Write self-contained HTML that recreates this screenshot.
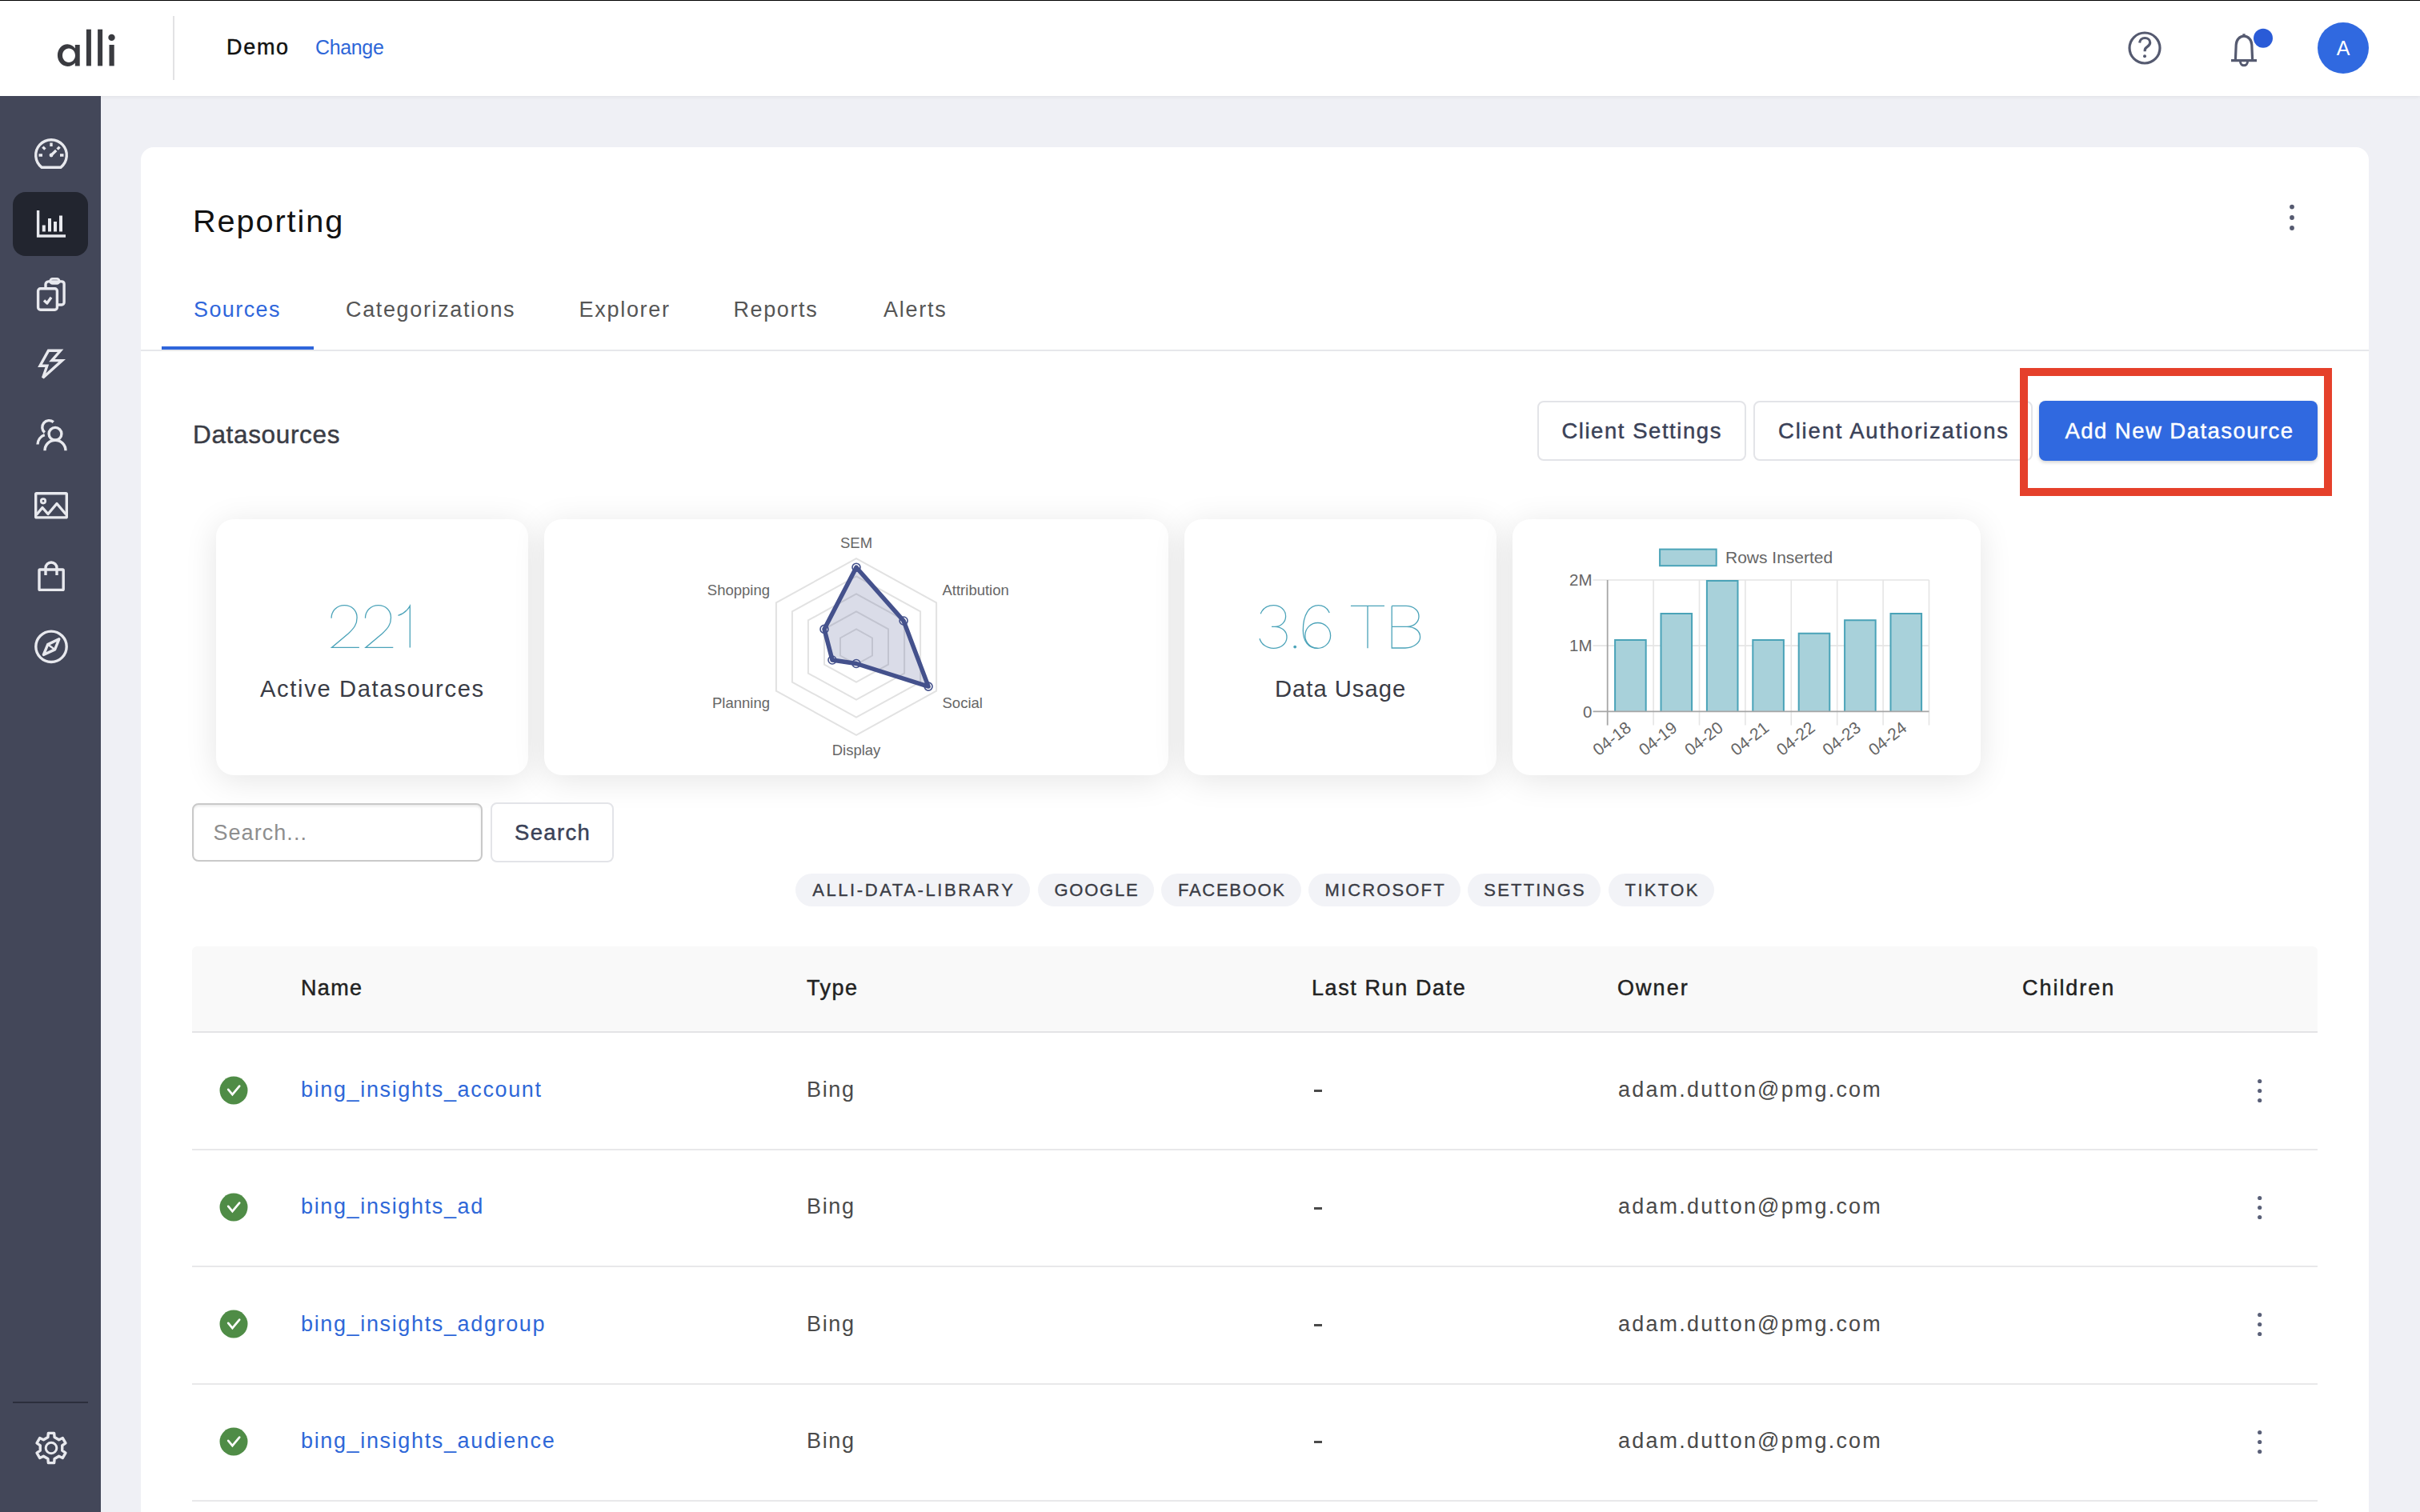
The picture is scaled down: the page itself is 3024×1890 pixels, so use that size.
<!DOCTYPE html>
<html><head><meta charset="utf-8">
<style>
*{box-sizing:border-box;margin:0;padding:0}
@media (max-width:2000px){html{zoom:0.5}}
html,body{width:3024px;height:1890px;overflow:hidden;background:#eff0f5;font-family:"Liberation Sans",sans-serif}
.a{position:absolute;white-space:nowrap;line-height:1}
svg{position:absolute;overflow:visible}
#hdr{position:absolute;left:0;top:0;width:3024px;height:120px;background:#fff;box-shadow:0 1px 5px rgba(0,0,0,0.07)}
#topline{position:absolute;left:0;top:0;width:3024px;height:1px;background:#000;z-index:5}
#side{position:absolute;left:0;top:120px;width:126px;height:1770px;background:#434759}
#card{position:absolute;left:176px;top:184px;width:2784px;height:1800px;background:#fff;border-radius:16px}
.med{-webkit-text-stroke:0.45px currentColor}
.btn{position:absolute;border:2px solid #e3e4e8;border-radius:8px;background:#fff}
.bt{font-size:27.5px;color:#3a4157;top:524.7px}
.sc{position:absolute;top:649px;height:320px;background:#fff;border-radius:22px;box-shadow:0 6px 40px rgba(0,0,0,0.105)}
.tag{position:absolute;top:1092px;height:41px;border-radius:21px;background:#f2f3f7;text-align:center;font-size:22px;line-height:41px;color:#3a3c45;letter-spacing:2.9px;-webkit-text-stroke:0.35px currentColor;text-indent:2.9px}
.th{top:1222.1px;font-size:27px;color:#222}
.td{font-size:27px;color:#4a4a4a;letter-spacing:1.64px}
</style></head><body>
<div id="hdr">
  <svg style="left:0;top:0" width="300" height="120" viewBox="0 0 300 120">
    <g fill="#3a3b40">
      <path fill-rule="evenodd" d="M84.3 55.2c-6.9 0-12.4 6.2-12.4 13.9s5.5 13.9 12.4 13.9c4 0 7.1-1.8 9.5-4.6v4.0h5.9V56h-5.9v4.4c-2.4-3-5.5-5.2-9.5-5.2zM86 60.6c4.4 0 8 3.9 8 8.7s-3.6 8.7-8 8.7-8-3.9-8-8.7 3.6-8.7 8-8.7z"/>
      <rect x="107.9" y="36.7" width="6" height="45.7"/>
      <rect x="122.1" y="36.7" width="6" height="45.7"/>
      <rect x="136.5" y="56" width="6.2" height="26.4"/>
      <circle cx="139.5" cy="46.9" r="4.2"/>
    </g>
    <rect x="216" y="20" width="2" height="80" fill="#e2e2e4"/>
  </svg>
  <div class="a med" id="demo" style="left:283px;top:45.6px;font-size:27px;color:#111;letter-spacing:1.7px">Demo</div>
  <div class="a" id="change" style="left:394px;top:46.8px;font-size:25px;color:#2e67d8;letter-spacing:-0.35px">Change</div>
  <!-- help -->
  <svg style="left:2650px;top:30px" width="60" height="60" viewBox="0 0 60 60">
    <circle cx="30" cy="30" r="19" fill="none" stroke="#555a70" stroke-width="3.2"/>
    <path d="M23.6 23.5c0.3-3.6 3-6 6.6-6 3.7 0 6.5 2.5 6.5 5.8 0 2.8-1.8 4.1-3.7 5.3-1.7 1.1-2.8 2-2.8 4.4v1.3" fill="none" stroke="#555a70" stroke-width="3.2"/>
    <circle cx="30" cy="40.3" r="2" fill="#555a70"/>
  </svg>
  <!-- bell -->
  <svg style="left:2770px;top:30px" width="80" height="60" viewBox="0 0 80 60">
    <path d="M18 45.6h32M23.4 44.6L24.2 26c0.2-6 4.3-10.8 9.8-10.8s9.6 4.8 9.8 10.8L44.6 44.6M34 15.2v-3" fill="none" stroke="#555a70" stroke-width="3.2"/>
    <path d="M29.5 47c0 2.7 2 4.8 4.5 4.8s4.5-2.1 4.5-4.8" fill="none" stroke="#555a70" stroke-width="3"/>
    <circle cx="58" cy="17.8" r="12.5" fill="#fff"/>
    <circle cx="58" cy="17.8" r="12" fill="#2a5bd7"/>
  </svg>
  <!-- avatar -->
  <div style="position:absolute;left:2896px;top:28px;width:64px;height:64px;border-radius:50%;background:#3069e0"></div>
  <div class="a" style="left:2896px;top:48px;width:64px;text-align:center;font-size:25px;color:#fff">A</div>
</div>
<div id="topline"></div>
<div id="side"></div>
<div style="position:absolute;left:16px;top:240px;width:94px;height:80px;border-radius:16px;background:#22252f"></div>
<svg style="left:0;top:0" width="126" height="1890" viewBox="0 0 126 1890">
 <g fill="none" stroke="#e8e9ee" stroke-width="3.4" stroke-linejoin="round">
  <!-- speedometer -->
  <path d="M52.2 209.3A19.3 19.3 0 1 1 75.8 209.3Z"/>
  <path d="M64 178.5v4.5M48.5 194h4.5M75 194h4.5M53.4 183.6l3 3M74.6 183.6l-3 3M64 194l6.2-6"/>
  <circle cx="64" cy="194" r="2.4" fill="#e8e9ee" stroke="none"/>
  <!-- bar chart -->
  <path d="M47.6 263V295H82" stroke-linejoin="miter"/>
  <path d="M54.8 281.5V289.4M62 273V289.4M69 277V289.4M76 269.6V289.4" stroke-width="4"/>
  <!-- clipboard -->
  <rect x="47.6" y="360.7" width="23.8" height="26.6" rx="3"/>
  <path d="M57 359.5V355.5a3.6 3.6 0 0 1 3.6-3.6H77.4a3 3 0 0 1 2.7 3V378a3 3 0 0 1-3 3H73"/>
  <rect x="62.7" y="348.4" width="11.4" height="5.9" rx="2.9" stroke-width="2.8"/>
  <path d="M55 375.6l3.8 3.4 5.2-7.2"/>
  <!-- lightning -->
  <path d="M60.5 438.3H75.6L64.8 450.6H77.6L53.6 472.2L58.8 457.2H50Z" stroke-linejoin="miter" stroke-miterlimit="3"/>
  <!-- people -->
  <path d="M66.8 527.6A8 8 0 1 0 55.8 540.6"/>
  <path d="M47 555.5A13 13 0 0 1 55.8 543.6"/>
  <circle cx="69" cy="542.3" r="7.9"/>
  <path d="M56 563.2A13 13 0 0 1 82 563.2"/>
  <!-- image -->
  <rect x="44.7" y="616.7" width="38.6" height="30.2" rx="1"/>
  <circle cx="54" cy="626.3" r="2.7" stroke-width="2.8"/>
  <path d="M45.5 643.5L53 634.5L60 642.5L71 629.5L82.5 643"/>
  <!-- bag -->
  <rect x="49" y="712" width="30.2" height="25.4" rx="1"/>
  <path d="M57 719V710A7 7 0 0 1 71 710V719"/>
  <!-- compass -->
  <circle cx="64" cy="808.3" r="19.2"/>
  <path d="M73.8 798.8L59.7 805.6L54.4 818.5L68.6 811.9Z"/>
  <path d="M59.7 805.6L68.6 811.9" stroke-width="2.4"/>
  <!-- gear -->
  <path d="M59.88 1796.52 L60.37 1791.35 L67.63 1791.35 L68.12 1796.52 L73.62 1799.69 L78.34 1797.53 L81.96 1803.81 L77.74 1806.83 L77.74 1813.17 L81.96 1816.19 L78.34 1822.47 L73.62 1820.31 L68.12 1823.48 L67.63 1828.65 L60.37 1828.65 L59.88 1823.48 L54.38 1820.31 L49.66 1822.47 L46.04 1816.19 L50.26 1813.17 L50.26 1806.83 L46.04 1803.81 L49.66 1797.53 L54.38 1799.69Z"/>
  <circle cx="64" cy="1810" r="6.8" stroke-width="3"/>
 </g>
 <rect x="16" y="1752" width="94" height="2" fill="#2b2e3c"/>
</svg>
<div id="card"></div>
<div class="a" id="rep" style="left:241px;top:256.5px;font-size:39.7px;color:#111;letter-spacing:1.9px">Reporting</div>
<svg style="left:2850px;top:250px" width="30" height="44" viewBox="0 0 30 44"><g fill="#555a70"><circle cx="14" cy="8.6" r="2.9"/><circle cx="14" cy="22" r="2.9"/><circle cx="14" cy="35" r="2.9"/></g></svg>
<div class="a" style="left:242px;top:374px;font-size:27px;color:#2f66db;letter-spacing:1.4px">Sources</div>
<div class="a" style="left:432px;top:374px;font-size:27px;color:#555;letter-spacing:1.64px">Categorizations</div>
<div class="a" style="left:723.6px;top:374px;font-size:27px;color:#555;letter-spacing:1.69px">Explorer</div>
<div class="a" style="left:916.5px;top:374px;font-size:27px;color:#555;letter-spacing:1.6px">Reports</div>
<div class="a" style="left:1104px;top:374px;font-size:27px;color:#555;letter-spacing:1.76px">Alerts</div>
<div style="position:absolute;left:176px;top:437px;width:2784px;height:2px;background:#e6e7eb"></div>
<div style="position:absolute;left:202px;top:433px;width:190px;height:4px;background:#2f66db"></div>
<div class="a med" style="left:241px;top:527.5px;font-size:31.5px;color:#3a3c45;letter-spacing:0.66px">Datasources</div>
<div class="btn" style="left:1921px;top:501px;width:261px;height:75px"></div>
<div class="btn" style="left:2191px;top:501px;width:349px;height:75px"></div>
<div style="position:absolute;left:2548px;top:501px;width:348px;height:75px;border-radius:8px;background:#3069e0;box-shadow:0 2px 4px rgba(0,0,0,0.18)"></div>
<div class="a med bt" style="left:1951.4px;letter-spacing:1.55px">Client Settings</div>
<div class="a med bt" style="left:2222px;letter-spacing:1.82px">Client Authorizations</div>
<div class="a med bt" style="left:2580.5px;color:#fff;letter-spacing:1.45px">Add New Datasource</div>
<div style="position:absolute;left:2524px;top:460px;width:390px;height:160px;border:10px solid #e5402b"></div>

<div class="sc" style="left:270px;width:390px"></div>
<div class="sc" style="left:680px;width:780px"></div>
<div class="sc" style="left:1480px;width:390px"></div>
<div class="sc" style="left:1890px;width:585px"></div>

<svg style="left:680px;top:649px" width="780" height="320" viewBox="680 649 780 320">
<g fill="none" stroke="#e2e2e2" stroke-width="2">
<polygon points="1070.0,786.4 1090.0,797.5 1090.0,819.5 1070.0,830.6 1050.0,819.5 1050.0,797.5"/>
<polygon points="1070.0,764.4 1110.0,786.4 1110.0,830.6 1070.0,852.6 1030.0,830.6 1030.0,786.4"/>
<polygon points="1070.0,742.3 1130.1,775.4 1130.1,841.6 1070.0,874.7 1009.9,841.6 1009.9,775.4"/>
<polygon points="1070.0,720.3 1150.1,764.4 1150.1,852.6 1070.0,896.7 989.9,852.6 989.9,764.4"/>
<polygon points="1070.0,698.2 1170.1,753.4 1170.1,863.6 1070.0,918.8 969.9,863.6 969.9,753.4"/>
</g>
<polygon points="1070.0,709.2 1129.1,776.0 1160.1,858.1 1070.0,829.5 1040.0,825.0 1030.0,786.4" fill="rgba(68,80,140,0.2)" stroke="#44518c" stroke-width="5.5" stroke-linejoin="round"/>
<circle cx="1070.0" cy="709.2" r="5" fill="none" stroke="#44518c" stroke-width="1.6"/>
<circle cx="1129.1" cy="776.0" r="5" fill="none" stroke="#44518c" stroke-width="1.6"/>
<circle cx="1160.1" cy="858.1" r="5" fill="none" stroke="#44518c" stroke-width="1.6"/>
<circle cx="1070.0" cy="829.5" r="5" fill="none" stroke="#44518c" stroke-width="1.6"/>
<circle cx="1040.0" cy="825.0" r="5" fill="none" stroke="#44518c" stroke-width="1.6"/>
<circle cx="1030.0" cy="786.4" r="5" fill="none" stroke="#44518c" stroke-width="1.6"/>
<g font-family="Liberation Sans" font-size="18.5" fill="#666">
<text x="1070" y="685" text-anchor="middle">SEM</text>
<text x="962" y="744" text-anchor="end">Shopping</text>
<text x="1177.5" y="744">Attribution</text>
<text x="962" y="884.6" text-anchor="end">Planning</text>
<text x="1177.5" y="884.6">Social</text>
<text x="1070" y="944" text-anchor="middle">Display</text>
</g></svg>
<svg style="left:1890px;top:649px" width="585" height="320" viewBox="1890 649 585 320">
<g stroke="#e5e5e5" stroke-width="1.6">
<line x1="2066.1" y1="725.0" x2="2066.1" y2="906.6"/>
<line x1="2123.5" y1="725.0" x2="2123.5" y2="906.6"/>
<line x1="2180.9" y1="725.0" x2="2180.9" y2="906.6"/>
<line x1="2238.3" y1="725.0" x2="2238.3" y2="906.6"/>
<line x1="2295.7" y1="725.0" x2="2295.7" y2="906.6"/>
<line x1="2353.1" y1="725.0" x2="2353.1" y2="906.6"/>
<line x1="2410.5" y1="725.0" x2="2410.5" y2="906.6"/>
<line x1="1990.6" y1="725.0" x2="2410.5" y2="725.0"/>
<line x1="1990.6" y1="807.1" x2="2410.5" y2="807.1"/>
</g>
<path d="M2018.1 889.3V799.9H2056.7V889.3" fill="#a8d1da" stroke="#4aa3b8" stroke-width="2"/>
<path d="M2075.5 889.3V767.1H2114.1V889.3" fill="#a8d1da" stroke="#4aa3b8" stroke-width="2"/>
<path d="M2132.9 889.3V726.0H2171.5V889.3" fill="#a8d1da" stroke="#4aa3b8" stroke-width="2"/>
<path d="M2190.3 889.3V799.9H2228.9V889.3" fill="#a8d1da" stroke="#4aa3b8" stroke-width="2"/>
<path d="M2247.7 889.3V791.7H2286.3V889.3" fill="#a8d1da" stroke="#4aa3b8" stroke-width="2"/>
<path d="M2305.1 889.3V775.3H2343.7V889.3" fill="#a8d1da" stroke="#4aa3b8" stroke-width="2"/>
<path d="M2362.5 889.3V767.1H2401.1V889.3" fill="#a8d1da" stroke="#4aa3b8" stroke-width="2"/>
<g stroke="#a6a6a6" stroke-width="1.8"><line x1="2008.7" y1="725.0" x2="2008.7" y2="906.6"/><line x1="1990.6" y1="889.3" x2="2410.5" y2="889.3"/></g>
<rect x="2074.1" y="686.6" width="70.6" height="20.6" fill="#a8d1da" stroke="#4aa3b8" stroke-width="2"/>
<g font-family="Liberation Sans" fill="#666">
<text x="2156" y="704.2" font-size="21">Rows Inserted</text>
<g font-size="20.5" text-anchor="end"><text x="1989.5" y="731.7">2M</text><text x="1989.5" y="814">1M</text><text x="1989.5" y="896.5">0</text></g>
<text x="2036.4" y="908" font-size="21" text-anchor="end" dominant-baseline="middle" transform="rotate(-38 2036.4 908)">04-18</text>
<text x="2093.8" y="908" font-size="21" text-anchor="end" dominant-baseline="middle" transform="rotate(-38 2093.8 908)">04-19</text>
<text x="2151.2" y="908" font-size="21" text-anchor="end" dominant-baseline="middle" transform="rotate(-38 2151.2 908)">04-20</text>
<text x="2208.6" y="908" font-size="21" text-anchor="end" dominant-baseline="middle" transform="rotate(-38 2208.6 908)">04-21</text>
<text x="2266.0" y="908" font-size="21" text-anchor="end" dominant-baseline="middle" transform="rotate(-38 2266.0 908)">04-22</text>
<text x="2323.4" y="908" font-size="21" text-anchor="end" dominant-baseline="middle" transform="rotate(-38 2323.4 908)">04-23</text>
<text x="2380.8" y="908" font-size="21" text-anchor="end" dominant-baseline="middle" transform="rotate(-38 2380.8 908)">04-24</text>
</g></svg>
<svg style="left:0;top:0" width="3024" height="1890" viewBox="0 0 3024 1890"><g fill="none" stroke="#4ba3b9" stroke-width="1.3">
<path d="M414.1 772.7C414.1 763.5 421 756.7 430.4 756.7C439.5 756.7 446.1 763.2 446.1 771.9C446.1 780.5 442.5 785 435.5 791.8L414.5 809.4H448.9"/><path transform="translate(42.4 0)" d="M414.1 772.7C414.1 763.5 421 756.7 430.4 756.7C439.5 756.7 446.1 763.2 446.1 771.9C446.1 780.5 442.5 785 435.5 791.8L414.5 809.4H448.9"/>
<path d="M512.3 809.6V757.4C508.5 764 503.5 767.5 497.5 769.4"/>
<path d="M1575.2 767.3C1578 760.5 1584 756.6 1591.4 756.6C1600 756.6 1606.6 762.5 1606.6 770.2C1606.6 777.8 1600.5 783.3 1593 783.3H1589M1593 783.3C1601.5 783.3 1608 789 1608 796.5C1608 804.5 1600.5 810.4 1591.4 810.4C1582.5 810.4 1576 805 1574 798.2"/>
<path d="M1661.2 765.9C1658.5 760 1653.5 756.6 1647.5 756.6C1636 756.6 1628.3 768 1628.3 788C1628.3 801.5 1635 810.4 1646.7 810.4"/>
<ellipse cx="1646.7" cy="794.4" rx="15.9" ry="15.9"/>
<path d="M1687.9 757.4H1730M1709 757.4V810.2"/>
<path d="M1739.2 757.4V810H1756C1766.5 810 1774.6 803.5 1774.6 796.3C1774.6 788.5 1767.5 783.3 1758 783.3H1739.2M1758 783.3C1766.5 783.3 1773 778 1773 770.5C1773 763 1766.5 757.4 1757 757.4H1739.2"/>
</g><circle cx="1618.2" cy="808.6" r="1.9" fill="#4ba3b9"/></svg>
<div class="a" style="left:325px;top:847.3px;font-size:29.2px;color:#3a3c45;letter-spacing:1.63px">Active Datasources</div>

<div class="a" style="left:1593px;top:847.3px;font-size:29.2px;color:#3a3c45;letter-spacing:1px">Data Usage</div>

<div style="position:absolute;left:240px;top:1004px;width:363px;height:73px;border:2px solid #c9c9c9;border-radius:8px;box-shadow:inset 0 2px 3px rgba(0,0,0,0.08)"></div>
<div class="a" style="left:266.5px;top:1027.8px;font-size:27px;color:#8e8e8e;letter-spacing:1.05px">Search...</div>
<div class="btn" style="left:613px;top:1003px;width:154px;height:75px"></div>
<div class="a med bt" style="left:643px;top:1027.4px;letter-spacing:1.35px">Search</div>

<div class="tag" style="left:994px;width:293px;letter-spacing:2.6px;text-indent:2.6px">ALLI-DATA-LIBRARY</div>
<div class="tag" style="left:1297px;width:145px;letter-spacing:1.76px;text-indent:1.76px">GOOGLE</div>
<div class="tag" style="left:1451px;width:175px;letter-spacing:1.7px;text-indent:1.7px">FACEBOOK</div>
<div class="tag" style="left:1635px;width:190px;letter-spacing:2.15px;text-indent:2.15px">MICROSOFT</div>
<div class="tag" style="left:1834px;width:166px;letter-spacing:2.2px;text-indent:2.2px">SETTINGS</div>
<div class="tag" style="left:2010px;width:132px;letter-spacing:2.34px;text-indent:2.34px">TIKTOK</div>

<div style="position:absolute;left:240px;top:1183px;width:2656px;height:107px;background:#f9f9f9;border-radius:6px 6px 0 0"></div>
<div style="position:absolute;left:240px;top:1289px;width:2656px;height:2px;background:#e4e4e6"></div>
<div class="a med th" style="left:376px;letter-spacing:1.35px">Name</div>
<div class="a med th" style="left:1008px;letter-spacing:1.5px">Type</div>
<div class="a med th" style="left:1639px;letter-spacing:1.59px">Last Run Date</div>
<div class="a med th" style="left:2021px;letter-spacing:2.05px">Owner</div>
<div class="a med th" style="left:2527px;letter-spacing:1.96px">Children</div>
<svg style="left:274px;top:1344.7px" width="36" height="36" viewBox="0 0 36 36"><circle cx="18" cy="18" r="17.5" fill="#4f8c46"/><path d="M11.2 16.9L16.4 23.2L25.2 12.6" fill="none" stroke="#fff" stroke-width="2.7" stroke-linecap="round"/></svg>
<div class="a td" style="left:376px;top:1348.9px;color:#2e67d8">bing_insights_account</div>
<div class="a td" style="left:1008px;top:1348.9px">Bing</div>
<div style="position:absolute;left:1642px;top:1362px;width:10px;height:3px;background:#4a4a4a"></div>
<div class="a td" style="left:2022px;top:1348.9px;letter-spacing:2.18px">adam.dutton@pmg.com</div>
<svg style="left:2810px;top:1342.7px" width="30" height="40" viewBox="0 0 30 40"><g fill="#5a6078"><circle cx="13.7" cy="8.5" r="2.6"/><circle cx="13.7" cy="20.5" r="2.6"/><circle cx="13.7" cy="32.5" r="2.6"/></g></svg>
<div style="position:absolute;left:240px;top:1436.0px;width:2656px;height:2px;background:#e8e8ea"></div>
<svg style="left:274px;top:1491.0px" width="36" height="36" viewBox="0 0 36 36"><circle cx="18" cy="18" r="17.5" fill="#4f8c46"/><path d="M11.2 16.9L16.4 23.2L25.2 12.6" fill="none" stroke="#fff" stroke-width="2.7" stroke-linecap="round"/></svg>
<div class="a td" style="left:376px;top:1495.2px;color:#2e67d8">bing_insights_ad</div>
<div class="a td" style="left:1008px;top:1495.2px">Bing</div>
<div style="position:absolute;left:1642px;top:1509px;width:10px;height:3px;background:#4a4a4a"></div>
<div class="a td" style="left:2022px;top:1495.2px;letter-spacing:2.18px">adam.dutton@pmg.com</div>
<svg style="left:2810px;top:1489.0px" width="30" height="40" viewBox="0 0 30 40"><g fill="#5a6078"><circle cx="13.7" cy="8.5" r="2.6"/><circle cx="13.7" cy="20.5" r="2.6"/><circle cx="13.7" cy="32.5" r="2.6"/></g></svg>
<div style="position:absolute;left:240px;top:1582.3px;width:2656px;height:2px;background:#e8e8ea"></div>
<svg style="left:274px;top:1637.3px" width="36" height="36" viewBox="0 0 36 36"><circle cx="18" cy="18" r="17.5" fill="#4f8c46"/><path d="M11.2 16.9L16.4 23.2L25.2 12.6" fill="none" stroke="#fff" stroke-width="2.7" stroke-linecap="round"/></svg>
<div class="a td" style="left:376px;top:1641.5px;color:#2e67d8">bing_insights_adgroup</div>
<div class="a td" style="left:1008px;top:1641.5px">Bing</div>
<div style="position:absolute;left:1642px;top:1655px;width:10px;height:3px;background:#4a4a4a"></div>
<div class="a td" style="left:2022px;top:1641.5px;letter-spacing:2.18px">adam.dutton@pmg.com</div>
<svg style="left:2810px;top:1635.3px" width="30" height="40" viewBox="0 0 30 40"><g fill="#5a6078"><circle cx="13.7" cy="8.5" r="2.6"/><circle cx="13.7" cy="20.5" r="2.6"/><circle cx="13.7" cy="32.5" r="2.6"/></g></svg>
<div style="position:absolute;left:240px;top:1728.6px;width:2656px;height:2px;background:#e8e8ea"></div>
<svg style="left:274px;top:1783.6px" width="36" height="36" viewBox="0 0 36 36"><circle cx="18" cy="18" r="17.5" fill="#4f8c46"/><path d="M11.2 16.9L16.4 23.2L25.2 12.6" fill="none" stroke="#fff" stroke-width="2.7" stroke-linecap="round"/></svg>
<div class="a td" style="left:376px;top:1787.8px;color:#2e67d8">bing_insights_audience</div>
<div class="a td" style="left:1008px;top:1787.8px">Bing</div>
<div style="position:absolute;left:1642px;top:1801px;width:10px;height:3px;background:#4a4a4a"></div>
<div class="a td" style="left:2022px;top:1787.8px;letter-spacing:2.18px">adam.dutton@pmg.com</div>
<svg style="left:2810px;top:1781.6px" width="30" height="40" viewBox="0 0 30 40"><g fill="#5a6078"><circle cx="13.7" cy="8.5" r="2.6"/><circle cx="13.7" cy="20.5" r="2.6"/><circle cx="13.7" cy="32.5" r="2.6"/></g></svg>
<div style="position:absolute;left:240px;top:1874.9px;width:2656px;height:2px;background:#e8e8ea"></div>

</body></html>
